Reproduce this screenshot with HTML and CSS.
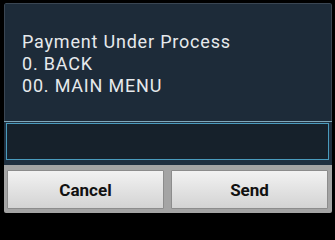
FILE: index.html
```html
<!DOCTYPE html>
<html>
<head>
<meta charset="utf-8">
<link rel="stylesheet" href="styles.css">
</head>
<body>
<div class="dialog">
  <div class="message">
    <p class="line">Payment Under Process</p>
    <p class="line">0. BACK</p>
    <p class="line">00. MAIN MENU</p>
  </div>
  <div class="entry">
    <div class="field"></div>
  </div>
  <div class="actions">
    <button class="btn">Cancel</button>
    <button class="btn">Send</button>
  </div>
</div>
</body>
</html>
```
FILE: styles.css
```css
html, body {
  margin: 0;
  padding: 0;
  background: #000;
  width: 335px;
  height: 216px;
  overflow: hidden;
}
.dialog {
  margin: 3px 3px 3px 4px;
  width: 328px;
  height: 210px;
  display: flex;
  flex-direction: column;
  border-radius: 2px;
  overflow: hidden;
}
.message {
  height: 118px;
  box-sizing: border-box;
  background: #1d2b39;
  border: 1px solid #3a4653;
  border-bottom: none;
  border-radius: 2px 2px 0 0;
  padding: 27px 0 0 17px;
  font-family: Roboto, "Noto Sans", sans-serif;
  font-size: 18px;
  letter-spacing: 0.8px;
  line-height: 22px;
  color: #e6e9ec;
}
.line {
  margin: 0;
}
.entry {
  border-top: 1px solid #7fa7b9;
  background: #203040;
  padding: 1px 3px 5px 2px;
}
.field {
  height: 35px;
  border: 1px solid #4a9bbd;
  background: #16212b;
}
.actions {
  flex: 1;
  display: flex;
  gap: 7px;
  padding: 5px 4px 4px 3px;
  background: #a4a4a4;
}
.btn {
  flex: 1;
  margin: 0;
  border: 1px solid #8c8c8c;
  border-radius: 1px;
  background: linear-gradient(#f2f2f2, #d3d3d3);
  font-family: Roboto, "Noto Sans", sans-serif;
  font-weight: bold;
  font-size: 17px;
  color: #111;
  padding: 0;
}
```
